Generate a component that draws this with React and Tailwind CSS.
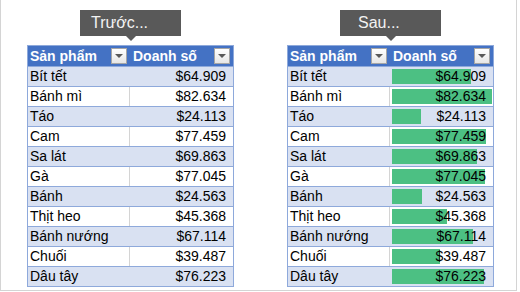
import React from 'react';

const rows = [
  ['Bít tết', 64.909],
  ['Bánh mì', 82.634],
  ['Táo', 24.113],
  ['Cam', 77.459],
  ['Sa lát', 69.863],
  ['Gà', 77.045],
  ['Bánh', 24.563],
  ['Thịt heo', 45.368],
  ['Bánh nướng', 67.114],
  ['Chuối', 39.487],
  ['Dâu tây', 76.223],
];

const MAX = 82.634;

function DropButton() {
  return (
    <span className="ml-auto mr-[3px] flex h-[16px] w-[16px] items-center justify-center border border-[#a6a6a6] bg-gradient-to-b from-white to-[#e6e6e6]">
      <span className="h-0 w-0 border-x-[4px] border-t-[4px] border-x-transparent border-t-[#595959]" />
    </span>
  );
}

function Callout({ label, pad }) {
  return (
    <div className="flex flex-col items-center">
      <div className={`flex h-[26px] w-[101px] items-center bg-[#595959] text-[16px] text-[#f2f2f2] ${pad}`}>
        {label}
      </div>
      <span className="h-0 w-0 border-x-[5px] border-t-[5px] border-x-transparent border-t-[#595959]" />
    </div>
  );
}

function SalesTable({ bars }) {
  return (
    <div className="mt-[4px] w-[207px] border border-[#8ea9db] text-[14px] text-black">
      <div className="flex h-[20px] bg-[#4472c4] font-bold text-white">
        <div className="flex w-[102px] items-center pl-[2px] text-[14px]">
          Sản phẩm
          <DropButton />
        </div>
        <div className="flex flex-1 items-center pl-[3px] text-[14px]">
          Doanh số
          <DropButton />
        </div>
      </div>
      {rows.map(([name, value], i) => {
        const band = i % 2 === 0;
        return (
          <div
            key={name}
            className={`flex h-[20px] border-t border-[#8ea9db] ${band ? 'bg-[#d9e1f2]' : 'bg-white'}`}
          >
            <div
              className={`flex w-[102px] items-center border-r pl-[2px] ${band ? 'border-transparent' : 'border-[#d4d4d4]'}`}
            >
              {name}
            </div>
            <div className="relative flex flex-1 items-center justify-end pr-[7px]">
              {bars && (
                <span
                  className="absolute left-[2px] top-[2px] h-[15px] bg-[#4cc083]"
                  style={{ width: `${(value / MAX) * 100}px` }}
                />
              )}
              <span className="relative">${value.toFixed(3)}</span>
            </div>
          </div>
        );
      })}
    </div>
  );
}

export default function App() {
  return (
    <div className="h-[292px] w-[520px] bg-white" style={{ fontFamily: '"Liberation Sans", Arial, sans-serif' }}>
      <div className="flex h-[291px] w-[517px] gap-[53px] border-x border-b border-[#d4d4d4] pl-[26px] pt-[10px]">
        <div className="flex flex-col items-center">
          <Callout label="Trước..." pad="pl-[11px]" />
          <SalesTable bars={false} />
        </div>
        <div className="flex flex-col items-center">
          <Callout label="Sau..." pad="pl-[18px]" />
          <SalesTable bars />
        </div>
      </div>
    </div>
  );
}
